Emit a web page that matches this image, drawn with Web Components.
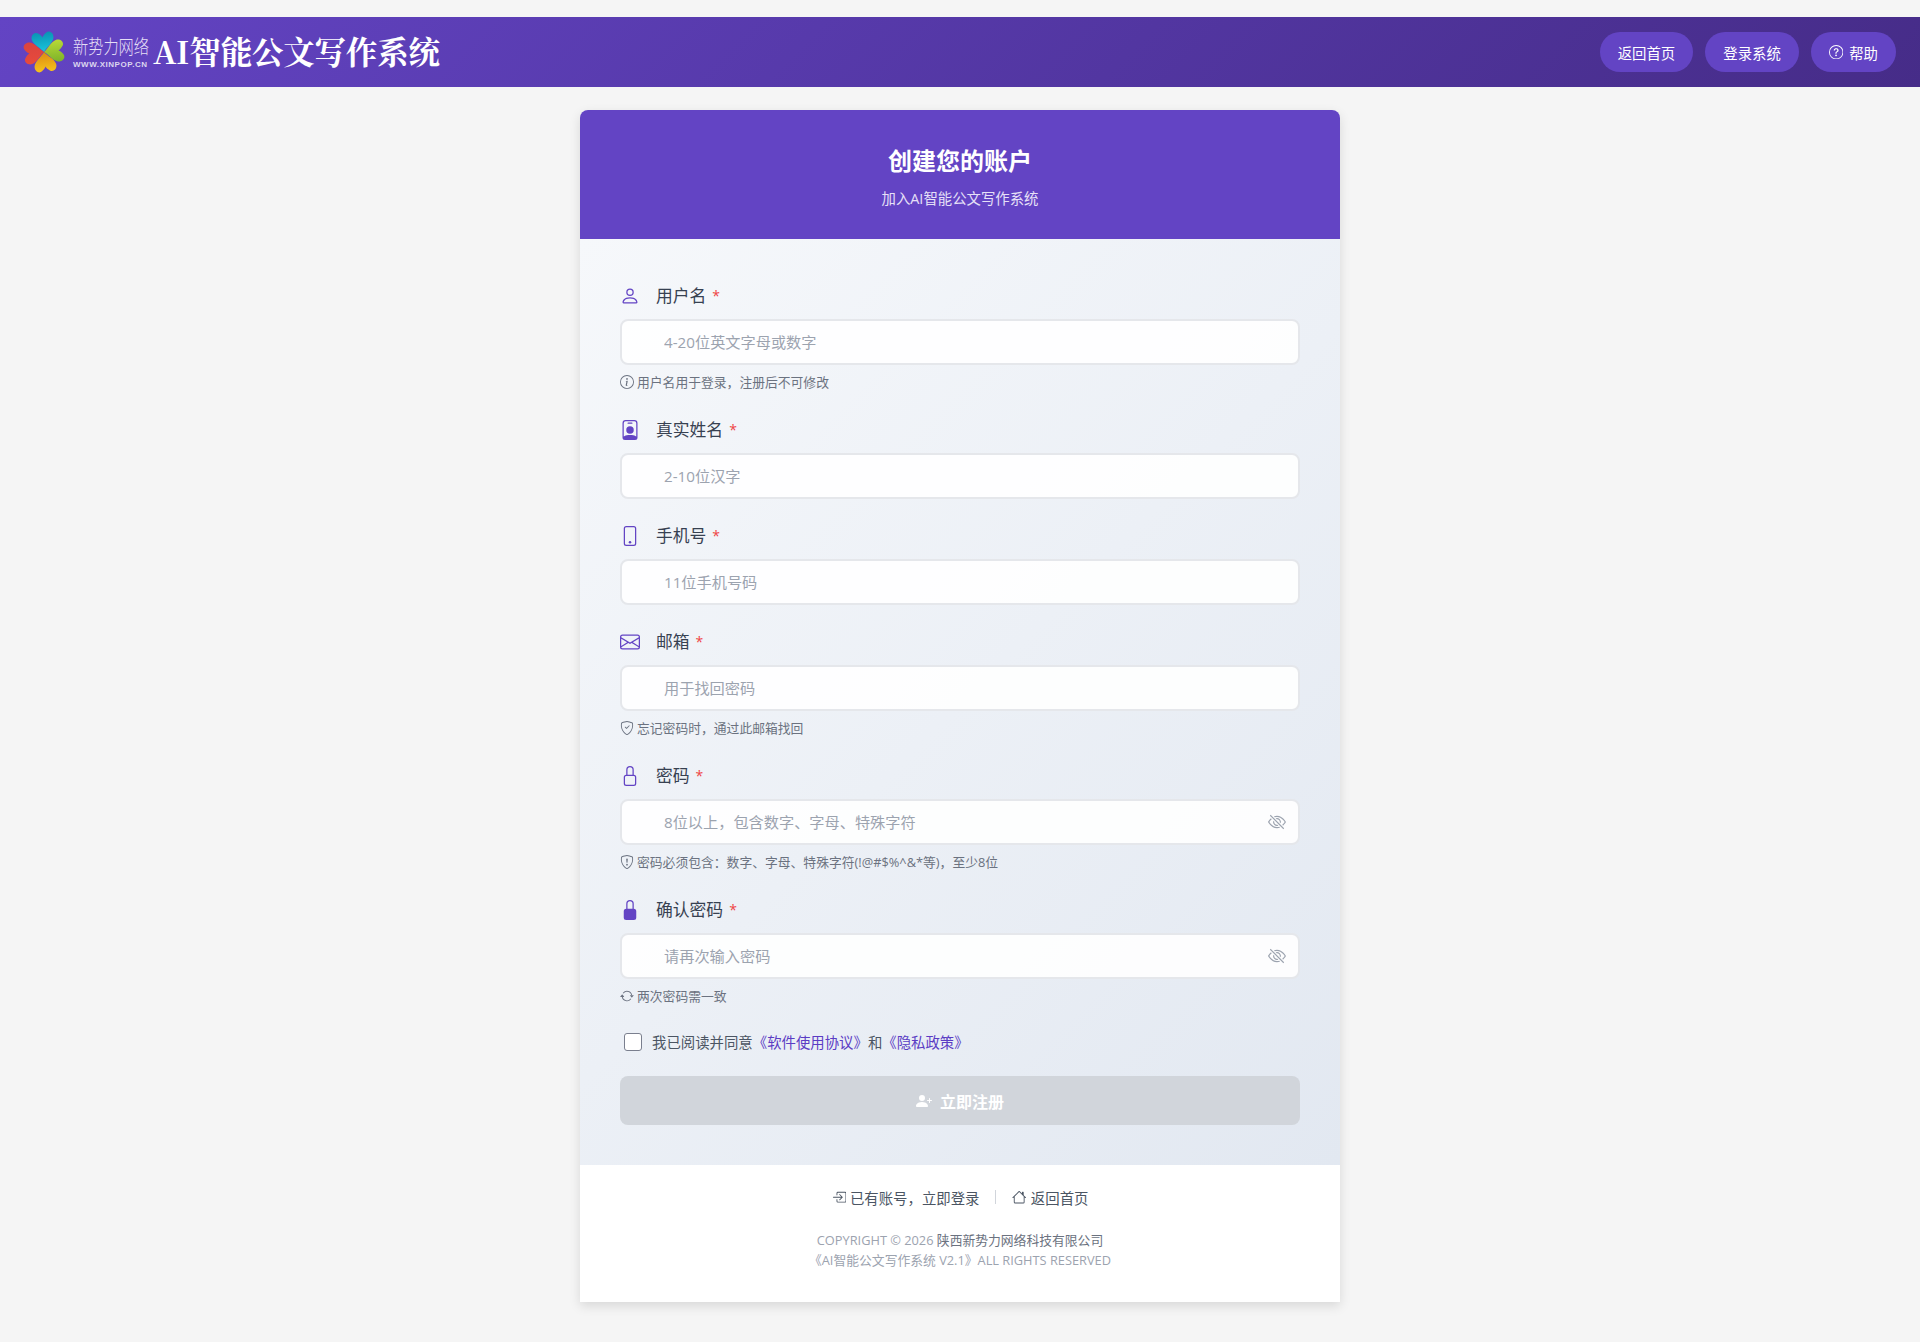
<!DOCTYPE html>
<html lang="zh-CN">
<head>
<meta charset="utf-8">
<title>注册 - AI智能公文写作系统</title>
<style>
html, body { margin: 0; padding: 0; }
body {
	background: #f5f5f5;
	font-family: "Open Sans", "Noto Sans CJK SC", sans-serif;
	color: #374151;
}
</style>
</head>
<body>
<app-header>
	<nav-pill>返回首页</nav-pill>
	<nav-pill>登录系统</nav-pill>
	<nav-pill icon="question-circle">帮助</nav-pill>
</app-header>

<register-card>
	<form-field slot="fields" icon="person" label="用户名" placeholder="4-20位英文字母或数字" hint="用户名用于登录，注册后不可修改" hint-icon="info-circle"></form-field>
	<form-field slot="fields" icon="person-badge-fill" label="真实姓名" placeholder="2-10位汉字"></form-field>
	<form-field slot="fields" icon="phone" label="手机号" placeholder="11位手机号码"></form-field>
	<form-field slot="fields" icon="envelope" label="邮箱" placeholder="用于找回密码" hint="忘记密码时，通过此邮箱找回" hint-icon="shield-check"></form-field>
	<form-field slot="fields" icon="lock" label="密码" placeholder="8位以上，包含数字、字母、特殊字符" hint="密码必须包含：数字、字母、特殊字符(!@#$%^&amp;*等)，至少8位" hint-icon="shield-exclamation" password></form-field>
	<form-field slot="fields" icon="lock-fill" label="确认密码" placeholder="请再次输入密码" hint="两次密码需一致" hint-icon="arrow-repeat" password></form-field>
</register-card>

<script>
(function() {

const SHIELD = '<path d="M5.338 1.59a61 61 0 0 0-2.837.856.48.48 0 0 0-.328.39c-.554 4.157.726 7.19 2.253 9.188a10.7 10.7 0 0 0 2.287 2.233c.346.244.652.42.893.533q.18.085.293.118a1 1 0 0 0 .101.025 1 1 0 0 0 .1-.025q.114-.034.294-.118c.24-.113.547-.29.893-.533a10.7 10.7 0 0 0 2.287-2.233c1.527-1.997 2.807-5.031 2.253-9.188a.48.48 0 0 0-.328-.39c-.651-.213-1.75-.56-2.837-.855C9.552 1.29 8.531 1.067 8 1.067c-.53 0-1.552.223-2.662.524zM5.072.56C6.157.265 7.31 0 8 0s1.843.265 2.928.56c1.11.3 2.229.655 2.887.87a1.54 1.54 0 0 1 1.044 1.262c.596 4.477-.787 7.795-2.465 9.99a11.8 11.8 0 0 1-2.517 2.453 7 7 0 0 1-1.048.625c-.28.132-.581.24-.829.24s-.548-.108-.829-.24a7 7 0 0 1-1.048-.625 11.8 11.8 0 0 1-2.517-2.453C1.928 10.487.545 7.169 1.141 2.692A1.54 1.54 0 0 1 2.185 1.43 63 63 0 0 1 5.072.56"/>';

const ICONS = {
	"person": '<path d="M8 8a3 3 0 1 0 0-6 3 3 0 0 0 0 6m2-3a2 2 0 1 1-4 0 2 2 0 0 1 4 0m4 8c0 1-1 1-1 1H3s-1 0-1-1 1-4 6-4 6 3 6 4m-1-.004c-.001-.246-.154-.986-.832-1.664C11.516 10.68 10.289 10 8 10s-3.516.68-4.168 1.332c-.678.678-.83 1.418-.832 1.664z"/>',
	"person-badge-fill": '<path d="M6.5 2a.5.5 0 0 0 0 1h3a.5.5 0 0 0 0-1zM11 8a3 3 0 1 1-6 0 3 3 0 0 1 6 0"/><path d="M4.5 0A2.5 2.5 0 0 0 2 2.5V14a2 2 0 0 0 2 2h8a2 2 0 0 0 2-2V2.5A2.5 2.5 0 0 0 11.5 0zM3 2.5A1.5 1.5 0 0 1 4.5 1h7A1.5 1.5 0 0 1 13 2.5v10.795a4.2 4.2 0 0 0-.776-.492C11.392 12.387 10.063 12 8 12s-3.392.387-4.224.803a4.2 4.2 0 0 0-.776.492z"/>',
	"phone": '<path d="M11 1a1 1 0 0 1 1 1v12a1 1 0 0 1-1 1H5a1 1 0 0 1-1-1V2a1 1 0 0 1 1-1zM5 0a2 2 0 0 0-2 2v12a2 2 0 0 0 2 2h6a2 2 0 0 0 2-2V2a2 2 0 0 0-2-2z"/><path d="M8 14a1 1 0 1 0 0-2 1 1 0 0 0 0 2"/>',
	"envelope": '<path d="M0 4a2 2 0 0 1 2-2h12a2 2 0 0 1 2 2v8a2 2 0 0 1-2 2H2a2 2 0 0 1-2-2zm2-1a1 1 0 0 0-1 1v.217l7 4.2 7-4.2V4a1 1 0 0 0-1-1zm13 2.383-4.708 2.825L15 11.105zm-.034 6.876-5.64-3.471L8 9.583l-1.326-.795-5.64 3.47A1 1 0 0 0 2 13h12a1 1 0 0 0 .966-.741M1 11.105l4.708-2.897L1 5.383z"/>',
	"lock": '<path d="M8 1a2 2 0 0 1 2 2v4H6V3a2 2 0 0 1 2-2m3 6V3a3 3 0 0 0-6 0v4a2 2 0 0 0-2 2v5a2 2 0 0 0 2 2h6a2 2 0 0 0 2-2V9a2 2 0 0 0-2-2M5 8h6a1 1 0 0 1 1 1v5a1 1 0 0 1-1 1H5a1 1 0 0 1-1-1V9a1 1 0 0 1 1-1"/>',
	"lock-fill": '<path d="M8 1a2 2 0 0 1 2 2v4H6V3a2 2 0 0 1 2-2m3 6V3a3 3 0 0 0-6 0v4a2 2 0 0 0-2 2v5a2 2 0 0 0 2 2h6a2 2 0 0 0 2-2V9a2 2 0 0 0-2-2"/>',
	"info-circle": '<path d="M8 15A7 7 0 1 1 8 1a7 7 0 0 1 0 14m0 1A8 8 0 1 0 8 0a8 8 0 0 0 0 16"/><path d="m8.93 6.588-2.29.287-.082.38.45.083c.294.07.352.176.288.469l-.738 3.468c-.194.897.105 1.319.808 1.319.545 0 1.178-.252 1.465-.598l.088-.416c-.2.176-.492.246-.686.246-.275 0-.375-.193-.304-.533zM9 4.5a1 1 0 1 1-2 0 1 1 0 0 1 2 0"/>',
	"shield-check": SHIELD + '<path d="M10.854 5.146a.5.5 0 0 1 0 .708l-3 3a.5.5 0 0 1-.708 0l-1.5-1.5a.5.5 0 1 1 .708-.708L7.5 7.793l2.646-2.647a.5.5 0 0 1 .708 0"/>',
	"shield-exclamation": SHIELD + '<path d="M7.001 11a1 1 0 1 1 2 0 1 1 0 0 1-2 0M7.1 4.995a.905.905 0 1 1 1.8 0l-.35 3.507a.553.553 0 0 1-1.1 0z"/>',
	"arrow-repeat": '<path d="M11.534 7h3.932a.25.25 0 0 1 .192.41l-1.966 2.36a.25.25 0 0 1-.384 0l-1.966-2.36a.25.25 0 0 1 .192-.41m-11 2h3.932a.25.25 0 0 0 .192-.41L2.692 6.23a.25.25 0 0 0-.384 0L.342 8.59A.25.25 0 0 0 .534 9"/><path d="M8 3c-1.552 0-2.94.707-3.857 1.818a.5.5 0 1 1-.771-.636A6.002 6.002 0 0 1 13.917 7H12.9A5 5 0 0 0 8 3M3.1 9a5.002 5.002 0 0 0 8.757 2.182.5.5 0 1 1 .771.636A6.002 6.002 0 0 1 2.083 9z"/>',
	"eye-slash": '<path d="M13.359 11.238C15.06 9.72 16 8 16 8s-3-5.5-8-5.5a7 7 0 0 0-2.79.588l.77.771A6 6 0 0 1 8 3.5c2.12 0 3.879 1.168 5.168 2.457A13 13 0 0 1 14.828 8q-.086.13-.195.288c-.335.48-.83 1.12-1.465 1.755q-.247.248-.517.486z"/><path d="M11.297 9.176a3.5 3.5 0 0 0-4.474-4.474l.823.823a2.5 2.5 0 0 1 2.829 2.829zm-2.943 1.299.822.822a3.5 3.5 0 0 1-4.474-4.474l.823.823a2.5 2.5 0 0 0 2.829 2.829"/><path d="M3.35 5.47q-.27.24-.518.487A13 13 0 0 0 1.172 8l.195.288c.335.48.83 1.12 1.465 1.755C4.121 11.332 5.881 12.5 8 12.5c.716 0 1.39-.133 2.02-.36l.77.772A7 7 0 0 1 8 13.5C3 13.5 0 8 0 8s.939-1.721 2.641-3.238l.708.709zm10.296 8.884-12-12 .708-.708 12 12z"/>',
	"person-plus-fill": '<path d="M1 14s-1 0-1-1 1-4 6-4 6 3 6 4-1 1-1 1zm5-6a3 3 0 1 0 0-6 3 3 0 0 0 0 6"/><path d="M13.5 5a.5.5 0 0 1 .5.5V7h1.5a.5.5 0 0 1 0 1H14v1.5a.5.5 0 0 1-1 0V8h-1.5a.5.5 0 0 1 0-1H13V5.5a.5.5 0 0 1 .5-.5"/>',
	"box-arrow-in-right": '<path d="M6 3.5a.5.5 0 0 1 .5-.5h8a.5.5 0 0 1 .5.5v9a.5.5 0 0 1-.5.5h-8a.5.5 0 0 1-.5-.5v-2a.5.5 0 0 0-1 0v2A1.5 1.5 0 0 0 6.5 14h8a1.5 1.5 0 0 0 1.5-1.5v-9A1.5 1.5 0 0 0 14.5 2h-8A1.5 1.5 0 0 0 5 3.5v2a.5.5 0 0 0 1 0z"/><path d="M11.854 8.354a.5.5 0 0 0 0-.708l-3-3a.5.5 0 1 0-.708.708L10.293 7.5H1.5a.5.5 0 0 0 0 1h8.793l-2.147 2.146a.5.5 0 0 0 .708.708z"/>',
	"house": '<path d="M8.707 1.5a1 1 0 0 0-1.414 0L.646 8.146a.5.5 0 0 0 .708.708L2 8.207V13.5A1.5 1.5 0 0 0 3.5 15h9a1.5 1.5 0 0 0 1.5-1.5V8.207l.646.647a.5.5 0 0 0 .708-.708L13 5.793V2.5a.5.5 0 0 0-.5-.5h-1a.5.5 0 0 0-.5.5v1.293zM13 7.207V13.5a.5.5 0 0 1-.5.5h-9a.5.5 0 0 1-.5-.5V7.207l5-5z"/>',
	"question-circle": '<path d="M8 15A7 7 0 1 1 8 1a7 7 0 0 1 0 14m0 1A8 8 0 1 0 8 0a8 8 0 0 0 0 16"/><path d="M5.255 5.786a.237.237 0 0 0 .241.247h.825c.138 0 .248-.113.266-.25.09-.656.54-1.134 1.342-1.134.686 0 1.314.343 1.314 1.168 0 .635-.374.927-.965 1.371-.673.489-1.206 1.06-1.168 1.987l.003.217a.25.25 0 0 0 .25.246h.811a.25.25 0 0 0 .25-.25v-.105c0-.718.273-.927 1.01-1.486.609-.463 1.244-.977 1.244-2.056 0-1.511-1.276-2.241-2.673-2.241-1.267 0-2.655.59-2.75 2.286m1.557 5.763c0 .533.425.927 1.01.927.609 0 1.028-.394 1.028-.927 0-.552-.42-.94-1.029-.94-.584 0-1.009.388-1.009.94"/>'
};

class BsIcon extends HTMLElement {
	constructor() {
		super();
		this.attachShadow({mode: "open"}).innerHTML = `
			<style>
			:host { display: inline-flex; flex: none; width: var(--icon-size, 16px); height: var(--icon-size, 16px); }
			svg { display: block; width: 100%; height: 100%; fill: currentColor; }
			</style>
			<svg viewBox="0 0 16 16"></svg>`;
	}
	static get observedAttributes() { return ["name"]; }
	attributeChangedCallback(attr, was, name) {
		this.shadowRoot.querySelector("svg").innerHTML = ICONS[name] || "";
	}
}
customElements.define("bs-icon", BsIcon);

class NavPill extends HTMLElement {
	constructor() {
		super();
		const icon = this.getAttribute("icon");
		this.attachShadow({mode: "open"}).innerHTML = `
			<style>
			:host {
				display: inline-flex; align-items: center; gap: 6px;
				height: 40px; padding: 0 18px; box-sizing: border-box;
				background: #6344c4; border-radius: 20px;
				color: #fff; font-size: 14.400px; cursor: pointer; --icon-size: 14.400px;
			}
			</style>
			${icon ? `<bs-icon name="${icon}"></bs-icon>` : ""}<slot></slot>`;
	}
}
customElements.define("nav-pill", NavPill);

// logo is a raster in the original, hearts are drawn here
const HEART = "M0 0C-4 -5 -13 -9 -15 -15C-16.500 -21 -10 -25 -5.500 -22C-3 -20.500 -1 -19 0 -17C1 -19 3 -20.500 5.500 -22C10 -25 16.500 -21 15 -15C13 -9 4 -5 0 0Z";

function heart(turn, fill) {
	return `<path d="${HEART}" fill="url(#${fill})" transform="rotate(${turn}) scale(.72,.86)"/>`;
}

const headerTmpl = document.createElement("template");
headerTmpl.innerHTML = `
	<style>
	:host {
		display: flex; align-items: center; justify-content: space-between;
		height: 70px; margin-top: 17px; padding: 0 24px 0 22px; box-sizing: border-box;
		background: linear-gradient(135deg, #6344c4 0%, #462c88 100%);
		color: #fff;
	}
	.brand { display: flex; align-items: center; }
	svg { display: block; width: 44px; height: 44px; margin-right: 7px; }
	.mark { display: flex; flex-direction: column; width: 76px; margin-right: 4px; color: #e4def5; }
	.cn { display: block; font-size: 15.200px; line-height: 26px; white-space: nowrap; transform: scaleY(1.3); font-weight: 300; }
	.en { font-size: 8px; line-height: 12px; font-weight: 700; letter-spacing: .55px; white-space: nowrap; color: #dcd6ef; font-family: "Liberation Sans", sans-serif; }
	h1 {
		margin: -2px 0 0; font-size: 31.500px; line-height: 44px; font-weight: 700; white-space: nowrap; letter-spacing: -.2px;
		font-family: "Noto Serif CJK SC", "Liberation Serif", "Noto Sans CJK SC", serif;
	}
	nav { display: flex; gap: 12px; }
	</style>
	<div class="brand">
		<svg viewBox="-22 -22 44 44">
			<defs>
				<linearGradient id="hc" x1="0" y1="0" x2="0" y2="1"><stop offset="0" stop-color="#0a93b4"/><stop offset="1" stop-color="#19c6dc"/></linearGradient>
				<linearGradient id="hg" x1="0" y1="0" x2="1" y2="0"><stop offset="0" stop-color="#b8d936"/><stop offset="1" stop-color="#7db32a"/></linearGradient>
				<linearGradient id="hy" x1="0" y1="0" x2="0" y2="1"><stop offset="0" stop-color="#f5c21c"/><stop offset="1" stop-color="#dd8a12"/></linearGradient>
				<linearGradient id="hr" x1="0" y1="0" x2="1" y2="0"><stop offset="0" stop-color="#e84a3c"/><stop offset="1" stop-color="#d9443f"/></linearGradient>
			</defs>
			<g transform="rotate(-6)">
				${heart(0, "hc")}${heart(90, "hg")}${heart(180, "hy")}${heart(270, "hr")}
			</g>
		</svg>
		<div class="mark"><span class="cn">新势力网络</span><span class="en">WWW.XINPOP.CN</span></div>
		<h1>AI智能公文写作系统</h1>
	</div>
	<nav><slot></slot></nav>`;

class AppHeader extends HTMLElement {
	constructor() {
		super();
		this.attachShadow({mode: "open"}).appendChild(headerTmpl.content.cloneNode(true));
	}
}
customElements.define("app-header", AppHeader);

const fieldTmpl = document.createElement("template");
fieldTmpl.innerHTML = `
	<style>
	:host { display: block; margin-bottom: 24px; }
	label {
		display: flex; align-items: center; height: 26px; margin-bottom: 10px;
		font-size: 16.800px; color: #374151;
	}
	.lead { color: #6344c4; margin-right: 16px; --icon-size: 20px; }
	.text, .req { margin-top: -2px; }
	.req { color: #ef4444; font-size: 14px; margin-left: 6px; }
	.box { position: relative; }
	input {
		display: block; width: 100%; height: 46px; box-sizing: border-box;
		padding: 0 42px; border: 2px solid #e5e7eb; border-radius: 8px;
		background: rgba(255,255,255,.9); font: inherit; font-size: 15.200px; outline: none;
	}
	input::placeholder { color: #9ca3af; opacity: 1; }
	.eye { position: absolute; right: 14px; top: 14px; color: #9ca3af; --icon-size: 18px; }
	.hint {
		display: flex; align-items: center; gap: 3px; height: 20px; margin-top: 6px; padding-bottom: 2px;
		font-size: 12.800px; color: #6b7280; --icon-size: 14px;
	}
	.hint bs-icon { margin-top: 1px; }
	</style>
	<label><bs-icon class="lead"></bs-icon><span class="text"></span><span class="req">*</span></label>
	<div class="box"><input type="text"></div>`;

class FormField extends HTMLElement {
	constructor() {
		super();
		const root = this.attachShadow({mode: "open"});
		root.appendChild(fieldTmpl.content.cloneNode(true));
		root.querySelector(".text").textContent = this.getAttribute("label");
		root.querySelector(".lead").setAttribute("name", this.getAttribute("icon"));
		const input = root.querySelector("input");
		input.placeholder = this.getAttribute("placeholder");
		if (this.hasAttribute("password")) {
			input.type = "password";
			const eye = document.createElement("bs-icon");
			eye.setAttribute("name", "eye-slash");
			eye.className = "eye";
			root.querySelector(".box").appendChild(eye);
		}
		if (this.hasAttribute("hint")) {
			const hint = document.createElement("div");
			hint.className = "hint";
			const icon = document.createElement("bs-icon");
			icon.setAttribute("name", this.getAttribute("hint-icon"));
			const span = document.createElement("span");
			span.textContent = this.getAttribute("hint");
			hint.append(icon, span);
			root.appendChild(hint);
		}
	}
}
customElements.define("form-field", FormField);

const cardTmpl = document.createElement("template");
cardTmpl.innerHTML = `
	<style>
	:host {
		display: block; width: 760px; margin: 23px auto 40px;
		border-radius: 8px 8px 0 0; overflow: hidden; background: #fff;
		box-shadow: 0 4px 12px rgba(0,0,0,.12);
	}
	.top {
		height: 129px; box-sizing: border-box; padding-top: 34px;
		background: #6344c4; color: #fff; text-align: center;
	}
	h2 { margin: 0; font-size: 24px; line-height: 34px; font-weight: 700; }
	.top p { margin: 11px 0 0; font-size: 14.400px; line-height: 20px; color: #e6e0f7; }
	.body {
		padding: 44px 40px 40px;
		background: linear-gradient(135deg, #f6f8fb 0%, #e2e8f1 100%);
	}
	.agree {
		display: flex; align-items: center; height: 24px; margin: -2px 0 23px; padding-left: 4px;
		font-size: 14.400px; color: #4b5563;
	}
	.agree input {
		appearance: none; width: 18px; height: 18px; margin: 2px 10px 0 0; box-sizing: border-box;
		background: #fff; border: 1px solid #7a7f8e; border-radius: 3px;
	}
	.agree a { color: #5b3cc4; text-decoration: none; }
	.submit {
		display: flex; align-items: center; justify-content: center; gap: 8px;
		width: 100%; height: 49px; border: 0; border-radius: 8px; padding: 0;
		background: #d1d5db; color: #fff; font: inherit; font-size: 16px; font-weight: 600;
	}
	.foot { height: 137px; box-sizing: border-box; padding-top: 22px; text-align: center; background: #fff; }
	.links { display: flex; align-items: center; justify-content: center; gap: 16px; height: 20px; font-size: 14.400px; color: #4b5563; }
	.links a { display: inline-flex; align-items: center; gap: 4px; color: inherit; text-decoration: none; --icon-size: 14.400px; }
	.sep { width: 1px; height: 14px; background: #d1d5db; }
	.copy { margin-top: 23px; font-size: 12.800px; line-height: 20px; color: #9ca3af; }
	.copy a { color: #6b7280; text-decoration: none; }
	</style>
	<div class="top">
		<h2>创建您的账户</h2>
		<p>加入AI智能公文写作系统</p>
	</div>
	<div class="body">
		<slot name="fields"></slot>
		<div class="agree">
			<input type="checkbox">
			<span>我已阅读并同意<a href="#">《软件使用协议》</a>和<a href="#">《隐私政策》</a></span>
		</div>
		<button class="submit" type="button"><bs-icon name="person-plus-fill"></bs-icon>立即注册</button>
	</div>
	<div class="foot">
		<div class="links">
			<a href="#"><bs-icon name="box-arrow-in-right"></bs-icon>已有账号，立即登录</a>
			<span class="sep"></span>
			<a href="#"><bs-icon name="house"></bs-icon>返回首页</a>
		</div>
		<div class="copy">COPYRIGHT © 2026 <a href="#">陕西新势力网络科技有限公司</a><br>《AI智能公文写作系统 V2.1》ALL RIGHTS RESERVED</div>
	</div>`;

class RegisterCard extends HTMLElement {
	constructor() {
		super();
		this.attachShadow({mode: "open"}).appendChild(cardTmpl.content.cloneNode(true));
	}
}
customElements.define("register-card", RegisterCard);

})();
</script>
</body>
</html>
